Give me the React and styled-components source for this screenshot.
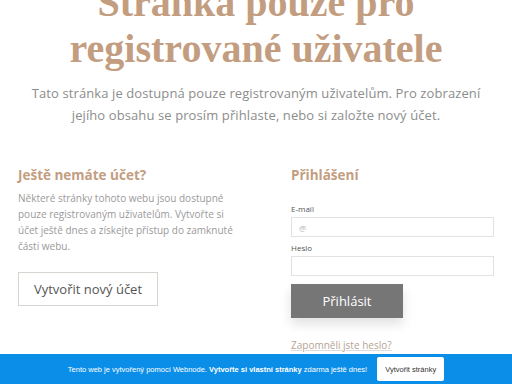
import React from 'react';
import styled, { createGlobalStyle } from 'styled-components';

const GlobalStyle = createGlobalStyle`
  html, body {
    margin: 0;
    padding: 0;
    background: #ffffff;
    font-family: "Open Sans", "Liberation Sans", sans-serif;
    overflow: hidden;
  }
`;

const Page = styled.div`
  width: 512px;
  height: 384px;
  position: relative;
  overflow: hidden;
`;

const Header = styled.header`
  display: flex;
  flex-direction: column;
  align-items: center;
  text-align: center;
  margin-top: -20px;
`;

const Title = styled.h1`
  margin: 0;
  font-family: "Liberation Serif", "DejaVu Serif", serif;
  font-weight: 700;
  font-size: 40px;
  line-height: 46px;
  color: #c39d80;
`;

const Lead = styled.p`
  margin: 10px 0 0;
  font-size: 13px;
  line-height: 22px;
  color: #8d8d8d;
  letter-spacing: 0.1px;
`;

const Columns = styled.div`
  display: grid;
  grid-template-columns: 273px 203px;
  padding: 40px 18px 0;
`;

const Column = styled.section`
  display: flex;
  flex-direction: column;
  align-items: flex-start;
`;

const Heading = styled.h2`
  margin: 0;
  font-size: 13.5px;
  font-weight: 700;
  color: #c39d80;
  line-height: 18px;
`;

const Text = styled.p`
  margin: 6px 0 0;
  width: 215px;
  font-size: 10px;
  line-height: 16px;
  color: #9a9a9a;
`;

const OutlineButton = styled.button`
  margin-top: 18px;
  width: 140px;
  height: 34px;
  border: 1px solid #d8d4cf;
  background: #fff;
  color: #555;
  font-family: inherit;
  font-size: 13px;
`;

const Form = styled.form`
  display: flex;
  flex-direction: column;
  width: 100%;
  margin-top: 20px;
`;

const Label = styled.label`
  font-size: 8px;
  color: #555;
  line-height: 10px;
  margin-top: ${({ first }) => (first ? 0 : 6)}px;
`;

const Input = styled.input`
  box-sizing: border-box;
  width: 100%;
  height: 20px;
  margin-top: 3px;
  border: 1px solid #e2e2e2;
  padding: 0 7px;
  font-family: inherit;
  font-size: 8px;
  color: #aaa;
  &::placeholder {
    color: #b5b5b5;
  }
`;

const SubmitButton = styled.button`
  margin-top: 8px;
  width: 112px;
  height: 34px;
  border: none;
  background: #767676;
  color: #fff;
  font-family: inherit;
  font-size: 13px;
  box-shadow: 0 6px 12px rgba(0, 0, 0, 0.12);
`;

const ForgotLink = styled.a`
  margin-top: 20px;
  font-size: 10px;
  color: #b5a394;
  text-decoration: underline;
  text-decoration-color: #ddd;
`;

const Bar = styled.div`
  position: absolute;
  left: 0;
  right: 0;
  bottom: 0;
  height: 30px;
  background: #0b8ee8;
  display: flex;
  align-items: center;
  justify-content: center;
  gap: 10px;
  font-family: "Liberation Sans", Arial, sans-serif;
  font-size: 7.5px;
  color: #fff;
`;

const BarButton = styled.span`
  background: #fff;
  color: #333;
  border-radius: 2px;
  padding: 0 8px;
  height: 24px;
  display: flex;
  align-items: center;
  font-size: 7.5px;
`;

export default function App() {
  return (
    <Page>
      <GlobalStyle />
      <Header>
        <Title>
          Stránka pouze pro
          <br />
          registrované uživatele
        </Title>
        <Lead>
          Tato stránka je dostupná pouze registrovaným uživatelům. Pro zobrazení
          <br />
          jejího obsahu se prosím přihlaste, nebo si založte nový účet.
        </Lead>
      </Header>
      <Columns>
        <Column>
          <Heading>Ještě nemáte účet?</Heading>
          <Text>
            Některé stránky tohoto webu jsou dostupné
            <br />
            pouze registrovaným uživatelům. Vytvořte si
            <br />
            účet ještě dnes a získejte přístup do zamknuté
            <br />
            části webu.
          </Text>
          <OutlineButton>Vytvořit nový účet</OutlineButton>
        </Column>
        <Column>
          <Heading>Přihlášení</Heading>
          <Form onSubmit={(e) => e.preventDefault()}>
            <Label first>E-mail</Label>
            <Input placeholder="@" />
            <Label>Heslo</Label>
            <Input type="password" />
            <SubmitButton type="submit">Přihlásit</SubmitButton>
          </Form>
          <ForgotLink href="#">Zapomněli jste heslo?</ForgotLink>
        </Column>
      </Columns>
      <Bar>
        <span>
          Tento web je vytvořený pomocí Webnode. <b>Vytvořte si vlastní stránky</b> zdarma ještě dnes!
        </span>
        <BarButton>Vytvořit stránky</BarButton>
      </Bar>
    </Page>
  );
}
